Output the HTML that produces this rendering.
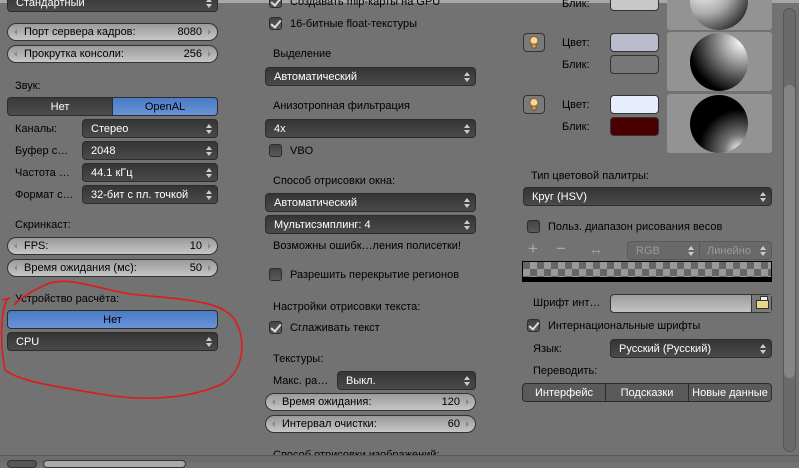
<!DOCTYPE html>
<html><head><meta charset="utf-8"><style>
*{margin:0;padding:0;box-sizing:border-box}
body{width:799px;height:463px;overflow:hidden;background:#727272;font-family:"Liberation Sans","DejaVu Sans",sans-serif;font-size:11px;color:#000;position:relative}
.a{position:absolute;white-space:nowrap}
.lbl{position:absolute;white-space:nowrap;line-height:13px}
.dd{position:absolute;height:19px;border:1px solid #2c2c2c;border-radius:4px;background:linear-gradient(#353535,#4a4a4a);color:#fff;line-height:18px;padding-left:8px;white-space:nowrap}
.dd:after{content:"";position:absolute;right:5px;top:4px;width:0;height:0;border-left:3px solid transparent;border-right:3px solid transparent;border-bottom:4px solid #ccc}
.dd:before{content:"";position:absolute;right:5px;top:10px;width:0;height:0;border-left:3px solid transparent;border-right:3px solid transparent;border-top:4px solid #ccc}
.num{position:absolute;height:18px;border:1px solid #333;border-radius:9px;background:linear-gradient(#9a9a9a,#c6c6c6);line-height:17px;padding:0 16px 0 16px;white-space:nowrap}
.num .v{position:absolute;right:15px;top:0}
.num:before{content:"";position:absolute;left:6px;top:5px;border-top:3px solid transparent;border-bottom:3px solid transparent;border-right:3px solid #888}
.num:after{content:"";position:absolute;right:6px;top:5px;border-top:3px solid transparent;border-bottom:3px solid transparent;border-left:3px solid #888}
.cb{position:absolute;width:13px;height:13px;border:1px solid #2c2c2c;border-radius:3px;background:linear-gradient(#444,#5a5a5a)}
.cb.on:after{content:"";position:absolute;left:3px;top:0px;width:4px;height:8px;border-right:2px solid #ddd;border-bottom:2px solid #ddd;transform:rotate(40deg)}
.sw{position:absolute;width:49px;height:19px;border:1px solid #333;border-radius:4px}
.sph{position:absolute;left:667px;width:105px;height:59px;background:#939393;border-radius:3px}
.ball{position:absolute;left:23px;top:1px;width:58px;height:58px;border-radius:50%}
.bulb{position:absolute;left:523px;width:22px;height:19px;border:1px solid #333;border-radius:4px;background:#7a7a7a}
.tg{position:absolute;height:19px;border:1px solid #2c2c2c;line-height:18px;text-align:center;white-space:nowrap}
</style></head><body>
<div class="a" style="left:0;top:0;width:799px;height:3px;background:#a8a8a8"></div>

<!-- LEFT -->
<div class="dd" style="left:7px;top:-7px;width:211px">Стандартный</div>
<div class="num" style="left:7px;top:23px;width:211px">Порт сервера кадров:<span class="v">8080</span></div>
<div class="num" style="left:7px;top:45px;width:211px">Прокрутка консоли:<span class="v">256</span></div>
<div class="lbl" style="left:15px;top:80px">Звук:</div>
<div class="tg" style="left:7px;top:97px;width:106px;background:linear-gradient(#3a3a3a,#4c4c4c);color:#fff;border-radius:4px 0 0 4px">Нет</div>
<div class="tg" style="left:112px;top:97px;width:106px;background:linear-gradient(#4a7bc4,#6893d8);border-radius:0 4px 4px 0">OpenAL</div>
<div class="lbl" style="left:15px;top:123px">Каналы:</div>
<div class="dd" style="left:82px;top:119px;width:136px">Стерео</div>
<div class="lbl" style="left:15px;top:145px">Буфер с…</div>
<div class="dd" style="left:82px;top:141px;width:136px">2048</div>
<div class="lbl" style="left:15px;top:167px">Частота …</div>
<div class="dd" style="left:82px;top:163px;width:136px">44.1 кГц</div>
<div class="lbl" style="left:15px;top:189px">Формат с…</div>
<div class="dd" style="left:82px;top:185px;width:136px">32-бит с пл. точкой</div>
<div class="lbl" style="left:15px;top:219px">Скринкаст:</div>
<div class="num" style="left:7px;top:237px;width:211px">FPS:<span class="v">10</span></div>
<div class="num" style="left:7px;top:259px;width:211px">Время ожидания (мс):<span class="v">50</span></div>
<div class="lbl" style="left:15px;top:293px">Устройство расчёта:</div>
<div class="tg" style="left:7px;top:310px;width:211px;background:linear-gradient(#4a7bc4,#6893d8);border-radius:4px">Нет</div>
<div class="dd" style="left:7px;top:332px;width:211px">CPU</div>
<svg class="a" style="left:0;top:270px" width="260" height="140" viewBox="0 270 260 140"><path d="M8 298 C0 310 0 345 5 370 C20 382 60 387 100 394 C140 401 185 400 220 385 C245 372 246 340 236 322 C225 300 185 300 130 294 C95 288 65 275 45 285 C30 292 20 298 14 305 M10 298 L2 300" fill="none" stroke="#e01a1a" stroke-width="1.6"/></svg>

<!-- MIDDLE -->
<div class="cb on" style="left:269px;top:-5px"></div>
<div class="lbl" style="left:290px;top:-4px">Создавать mip-карты на GPU</div>
<div class="cb on" style="left:269px;top:17px"></div>
<div class="lbl" style="left:290px;top:18px">16-битные float-текстуры</div>
<div class="lbl" style="left:273px;top:48px">Выделение</div>
<div class="dd" style="left:265px;top:67px;width:211px">Автоматический</div>
<div class="lbl" style="left:273px;top:100px">Анизотропная фильтрация</div>
<div class="dd" style="left:265px;top:119px;width:211px">4x</div>
<div class="cb" style="left:269px;top:144px"></div>
<div class="lbl" style="left:290px;top:145px">VBO</div>
<div class="lbl" style="left:273px;top:175px">Способ отрисовки окна:</div>
<div class="dd" style="left:265px;top:193px;width:211px">Автоматический</div>
<div class="dd" style="left:265px;top:215px;width:211px">Мультисэмплинг: 4</div>
<div class="lbl" style="left:273px;top:240px">Возможны ошибк…ления полисетки!</div>
<div class="cb" style="left:269px;top:268px"></div>
<div class="lbl" style="left:290px;top:269px">Разрешить перекрытие регионов</div>
<div class="lbl" style="left:273px;top:301px">Настройки отрисовки текста:</div>
<div class="cb on" style="left:269px;top:321px"></div>
<div class="lbl" style="left:290px;top:322px">Сглаживать текст</div>
<div class="lbl" style="left:273px;top:353px">Текстуры:</div>
<div class="lbl" style="left:273px;top:375px">Макс. ра…</div>
<div class="dd" style="left:337px;top:371px;width:139px">Выкл.</div>
<div class="num" style="left:265px;top:393px;width:211px">Время ожидания:<span class="v">120</span></div>
<div class="num" style="left:265px;top:415px;width:211px">Интервал очистки:<span class="v">60</span></div>
<div class="lbl" style="left:273px;top:449px">Способ отрисовки изображений:</div>

<!-- RIGHT -->
<div class="lbl" style="left:562px;top:-2px">Блик:</div>
<div class="sw" style="left:610px;top:-8px;background:#c8c8c8"></div>
<div class="sph" style="top:-29px"><div class="ball" style="background:radial-gradient(circle at 25% 25%,#fff,#aaa 45%,#111 90%)"></div></div>

<div class="bulb" style="top:33px"><svg width="20" height="17" viewBox="0 0 20 17"><circle cx="10" cy="6.5" r="4" fill="#f3d9a0" stroke="#a0581a" stroke-width="1"/><rect x="8" y="10" width="4" height="4" fill="#c8a060" stroke="#6a4010" stroke-width=".7"/></svg></div>
<div class="lbl" style="left:562px;top:37px">Цвет:</div>
<div class="sw" style="left:610px;top:33px;background:#b9bccc"></div>
<div class="lbl" style="left:562px;top:59px">Блик:</div>
<div class="sw" style="left:610px;top:55px;background:#777"></div>
<div class="sph" style="top:32px"><div class="ball" style="background:radial-gradient(circle at 90% 15%,#fff,#888 35%,#000 75%)"></div></div>

<div class="bulb" style="top:95px"><svg width="20" height="17" viewBox="0 0 20 17"><circle cx="10" cy="6.5" r="4" fill="#f3d9a0" stroke="#a0581a" stroke-width="1"/><rect x="8" y="10" width="4" height="4" fill="#c8a060" stroke="#6a4010" stroke-width=".7"/></svg></div>
<div class="lbl" style="left:562px;top:99px">Цвет:</div>
<div class="sw" style="left:610px;top:95px;background:#e8ecff"></div>
<div class="lbl" style="left:562px;top:121px">Блик:</div>
<div class="sw" style="left:610px;top:117px;background:#4a0000"></div>
<div class="sph" style="top:94px"><div class="ball" style="background:radial-gradient(circle at 85% 95%,#fff,#777 20%,#000 55%)"></div></div>

<div class="lbl" style="left:531px;top:170px">Тип цветовой палитры:</div>
<div class="dd" style="left:523px;top:187px;width:249px">Круг (HSV)</div>
<div class="cb" style="left:527px;top:220px"></div>
<div class="lbl" style="left:548px;top:221px">Польз. диапазон рисования весов</div>
<div class="a" style="left:528px;top:239px;color:#aaa;font-size:17px">+</div>
<div class="a" style="left:556px;top:239px;color:#aaa;font-size:17px">−</div>
<div class="a" style="left:589px;top:241px;color:#aaa;font-size:14px">↔</div>
<div class="dd" style="left:627px;top:241px;width:73px;background:#696969;color:#9a9a9a;border-color:#5a5a5a;border-radius:4px 0 0 4px">RGB</div>
<div class="dd" style="left:699px;top:241px;width:73px;background:#696969;color:#9a9a9a;border-color:#5a5a5a;border-radius:0 4px 4px 0;padding-left:7px">Линейно</div>
<div class="a" style="left:522px;top:261px;width:250px;height:21px;border:1px solid #000;background-color:#666;background-image:linear-gradient(45deg,#999 25%,transparent 25%,transparent 75%,#999 75%),linear-gradient(45deg,#999 25%,transparent 25%,transparent 75%,#999 75%);background-size:14px 14px;background-position:0 0,7px 7px"><div class="a" style="left:0;bottom:0;width:100%;height:4px;background:#000"></div></div>
<div class="lbl" style="left:533px;top:297px">Шрифт инт…</div>
<div class="a" style="left:610px;top:294px;width:162px;height:19px;border:1px solid #333;border-radius:4px;background:linear-gradient(#9c9c9c,#c4c4c4)"><div class="a" style="right:0;top:0;width:20px;height:17px;border-left:1px solid #333;background:#7a7a7a"><div class="a" style="left:4px;top:5px;width:13px;height:9px;background:#e8d88c;border:1px solid #333"></div><div class="a" style="left:8px;top:1px;width:8px;height:5px;background:#eee;border:1px solid #333"></div></div></div>
<div class="cb on" style="left:527px;top:319px"></div>
<div class="lbl" style="left:548px;top:320px">Интернациональные шрифты</div>
<div class="lbl" style="left:533px;top:343px">Язык:</div>
<div class="dd" style="left:610px;top:339px;width:162px">Русский (Русский)</div>
<div class="lbl" style="left:533px;top:365px">Переводить:</div>
<div class="tg" style="left:522px;top:383px;width:84px;background:#5a5a5a;color:#fff;border-radius:4px 0 0 4px">Интерфейс</div>
<div class="tg" style="left:605px;top:383px;width:84px;background:#5a5a5a;color:#fff">Подсказки</div>
<div class="tg" style="left:688px;top:383px;width:84px;background:#5a5a5a;color:#fff;border-radius:0 4px 4px 0">Новые данные</div>

<!-- scrollbar -->
<div class="a" style="left:783px;top:8px;width:13px;height:444px;border:1px solid #555;border-radius:7px;background:#6a6a6a"></div>
<div class="a" style="left:784px;top:85px;width:11px;height:293px;border-radius:6px;background:#858585"></div>

<!-- bottom bar -->
<div class="a" style="left:0;top:455px;width:799px;height:8px;background:#6c6c6c;border-top:1px solid #5a5a5a"></div>
<div class="a" style="left:7px;top:460px;width:30px;height:8px;border:1px solid #333;border-radius:4px;background:#555"></div>
<div class="a" style="left:43px;top:460px;width:143px;height:8px;border:1px solid #333;border-radius:4px;background:#aaa"></div>
</body></html>
